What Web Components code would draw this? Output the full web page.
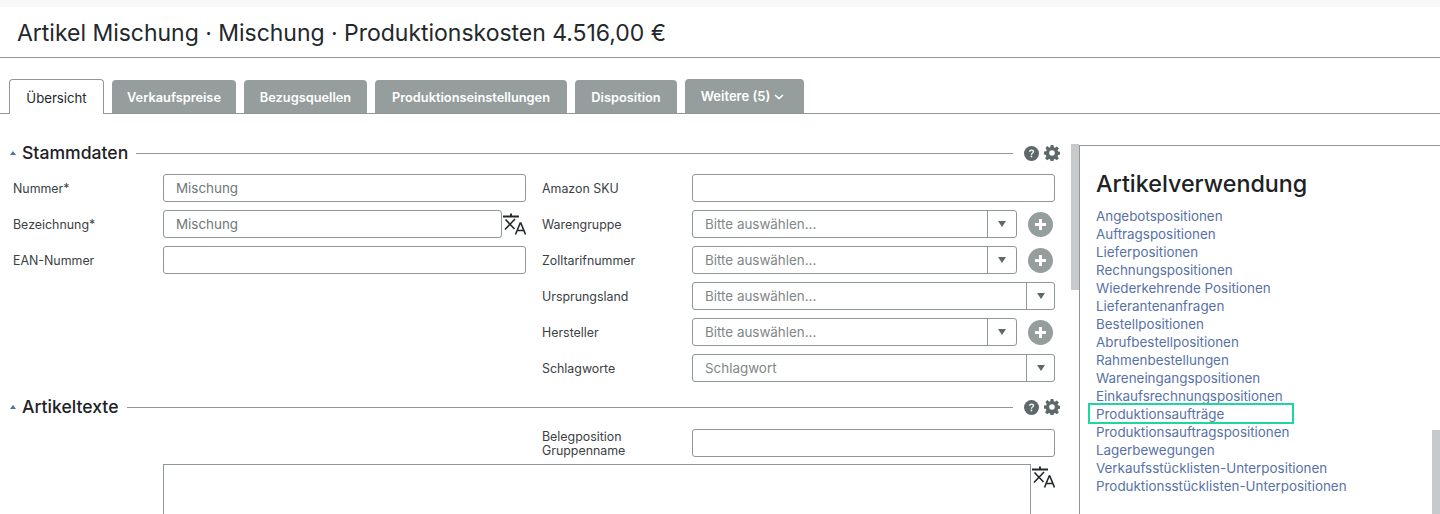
<!DOCTYPE html>
<html lang="de">
<head>
<meta charset="utf-8">
<title>Artikel Mischung</title>
<style>
    html, body { margin: 0; height: 514px; overflow: hidden; background: #fff; }
    body { font-family: Inter, "Noto Sans", sans-serif; color: #23282b; }
</style>
</head>
<body>
<page-title>Artikel Mischung · Mischung · Produktionskosten 4.516,00 €</page-title>
<tab-bar>
    <tab-item active style="width: 95px">Übersicht</tab-item>
    <tab-item style="width: 124px">Verkaufspreise</tab-item>
    <tab-item style="width: 123px">Bezugsquellen</tab-item>
    <tab-item style="width: 192px">Produktionseinstellungen</tab-item>
    <tab-item style="width: 102px">Disposition</tab-item>
    <tab-item more style="width: 119px">Weitere (5)</tab-item>
</tab-bar>
<main-layout>
    <form-section heading="Stammdaten">
        <form-grid>
            <form-field label="Nummer*"><text-box value="Mischung"></text-box></form-field>
            <form-field label="Amazon SKU"><text-box></text-box></form-field>
            <form-field label="Bezeichnung*"><text-box value="Mischung" translate-icon></text-box></form-field>
            <form-field label="Warengruppe"><select-box add></select-box></form-field>
            <form-field label="EAN-Nummer"><text-box></text-box></form-field>
            <form-field label="Zolltarifnummer"><select-box add></select-box></form-field>
            <form-spacer></form-spacer>
            <form-field label="Ursprungsland"><select-box></select-box></form-field>
            <form-spacer></form-spacer>
            <form-field label="Hersteller"><select-box add></select-box></form-field>
            <form-spacer></form-spacer>
            <form-field label="Schlagworte"><select-box placeholder="Schlagwort"></select-box></form-field>
        </form-grid>
    </form-section>
    <form-section heading="Artikeltexte" class="second">
        <form-grid>
            <form-spacer></form-spacer>
            <form-field label="Belegposition Gruppenname"><text-box></text-box></form-field>
        </form-grid>
        <text-area-box></text-area-box>
    </form-section>
    <usage-panel slot="aside" heading="Artikelverwendung">
        <usage-link>Angebotspositionen</usage-link>
        <usage-link>Auftragspositionen</usage-link>
        <usage-link>Lieferpositionen</usage-link>
        <usage-link>Rechnungspositionen</usage-link>
        <usage-link>Wiederkehrende Positionen</usage-link>
        <usage-link>Lieferantenanfragen</usage-link>
        <usage-link>Bestellpositionen</usage-link>
        <usage-link>Abrufbestellpositionen</usage-link>
        <usage-link>Rahmenbestellungen</usage-link>
        <usage-link>Wareneingangspositionen</usage-link>
        <usage-link>Einkaufsrechnungspositionen</usage-link>
        <usage-link marked>Produktionsaufträge</usage-link>
        <usage-link>Produktionsauftragspositionen</usage-link>
        <usage-link>Lagerbewegungen</usage-link>
        <usage-link>Verkaufsstücklisten-Unterpositionen</usage-link>
        <usage-link>Produktionsstücklisten-Unterpositionen</usage-link>
    </usage-panel>
</main-layout>

<script>
const TRANSLATE_SVG = `
    <svg width="23" height="24" viewBox="0 0 23 24" fill="none" stroke="#23282b" stroke-width="1.6">
        <path stroke-width="1.9" d="M0 4.500h16M8 1.500v3"/>
        <path d="M2.500 7.500l9 9.500M12 7l-10 10.500"/>
        <path d="M12.500 22.500l4.700-11.500h.6l4.700 11.500M14.200 18.500h6.600"/>
    </svg>`;

class PageTitle extends HTMLElement {
    connectedCallback() {
        this.attachShadow({ mode: 'open' });
        this.shadowRoot.innerHTML = `
            <style>
                :host {
                    display: block;
                    margin-top: 7px;
                    height: 50px;
                    box-shadow: 0 -7px 0 #f8f8f8;
                    border-bottom: 1px solid #8f9797;
                    padding-left: 17px;
                    font-size: 23px;
                    letter-spacing: -0.02px;
                    line-height: 52px;
                    color: #23282b;
                    white-space: nowrap;
                }
            </style>
            <slot></slot>
        `;
    }
}

class TabBar extends HTMLElement {
    connectedCallback() {
        this.attachShadow({ mode: 'open' });
        this.shadowRoot.innerHTML = `
            <style>
                :host {
                    display: flex;
                    align-items: flex-end;
                    gap: 8px;
                    height: 34px;
                    margin-top: 21px;
                    padding-left: 9px;
                    border-bottom: 1px solid #8f9797;
                }
            </style>
            <slot></slot>
        `;
    }
}

class TabItem extends HTMLElement {
    connectedCallback() {
        this.attachShadow({ mode: 'open' });
        const more = this.hasAttribute('more');
        this.shadowRoot.innerHTML = `
            <style>
                :host {
                    display: flex;
                    align-items: center;
                    justify-content: center;
                    box-sizing: border-box;
                    height: 33px;
                    padding-top: 1px;
                    background: #959d9d;
                    border-radius: 4px 4px 0 0;
                    color: #fff;
                    font-size: 12.800px;
                    font-weight: 600;
                    white-space: nowrap;
                }
                :host([active]) {
                    height: 35px;
                    margin-bottom: -1px;
                    background: #fff;
                    color: #23282b;
                    font-size: 13.200px;
                    font-weight: 400;
                    border: 1px solid #8f9797;
                    border-bottom: 0;
                }
                :host([more]) { height: 34px; padding: 0 4px 0 0; font-size: 13px; }
                svg { margin-left: 4px; margin-top: 2px; }
            </style>
            <slot></slot>
            ${more ? '<svg width="10" height="6" viewBox="0 0 10 6" fill="none" stroke="#fff" stroke-width="1.6"><path d="M1 1l4 3.700L9 1"/></svg>' : ''}
        `;
    }
}

class MainLayout extends HTMLElement {
    connectedCallback() {
        this.attachShadow({ mode: 'open' });
        this.shadowRoot.innerHTML = `
            <style>
                :host {
                    display: grid;
                    grid-template-columns: 1071px 8px 1fr;
                    position: relative;
                    height: 400px;
                    overflow: hidden;
                }
                .left { padding-top: 22px; }
                .track { padding-top: 30px; }
                .thumb { height: 146px; background: #c8c9cb; }
                .thumb.end {
                    position: absolute;
                    right: 0;
                    top: 316px;
                    width: 8px;
                    height: 84px;
                }
            </style>
            <div class="left"><slot></slot></div>
            <div class="track"><div class="thumb"></div></div>
            <slot name="aside"></slot>
            <div class="thumb end"></div>
        `;
    }
}

class FormSection extends HTMLElement {
    connectedCallback() {
        this.attachShadow({ mode: 'open' });
        this.shadowRoot.innerHTML = `
            <style>
                :host { display: block; }
                :host(.second) { margin-top: 8px; }
                header {
                    display: flex;
                    align-items: center;
                    height: 34px;
                    margin: 0 1px 4px 0;
                    padding: 0 10px;
                }
                .caret {
                    width: 0; height: 0;
                    border: 3.500px solid transparent;
                    border-top: 0;
                    border-bottom: 4px solid #566f9f;
                    margin-right: 6px;
                }
                h2 {
                    margin: 0 0 2px;
                    font-size: 17.600px;
                    font-weight: 500;
                    color: #1d2225;
                    white-space: nowrap;
                }
                .line { flex: 1; height: 1px; background: #8f9797; margin: 0 11px 0 8px; }
                .icons { display: flex; gap: 5px; align-items: center; }
                svg { display: block; }
            </style>
            <header>
                <span class="caret"></span>
                <h2>${this.getAttribute('heading')}</h2>
                <span class="line"></span>
                <span class="icons">
                    <svg width="15" height="15" viewBox="0 0 15 15">
                        <circle cx="7.500" cy="7.500" r="7.500" fill="#5f6869"/>
                        <path d="M5 5.800c.1-1.500 1.200-2.300 2.600-2.300 1.500 0 2.600.9 2.600 2.100 0 1.900-2.100 1.700-2.100 3.200H6.700c0-2.100 2-2 2-3.100 0-.5-.5-.9-1.100-.9-.7 0-1.100.4-1.200 1z" fill="#fff"/>
                        <rect x="6.700" y="9.700" width="1.500" height="1.600" fill="#fff"/>
                    </svg>
                    <svg width="16" height="16" viewBox="0 0 16 16">
                        <path fill="#5f6869" fill-rule="evenodd" d="M6.600 0h2.800l.4 2.200 1.200.5 1.900-1.300 2 2-1.300 1.900.5 1.200 2.200.4v2.800l-2.200.4-.5 1.200 1.300 1.900-2 2-1.900-1.300-1.200.5-.4 2.200H6.600l-.4-2.200-1.200-.5-1.900 1.300-2-2 1.300-1.900-.5-1.200L0 9.400V6.600l2.200-.4.5-1.200-1.300-1.900 2-2L5.300 2.700l1-.5zM8 5.200a2.800 2.800 0 1 0 0 5.600 2.800 2.800 0 0 0 0-5.600z"/>
                    </svg>
                </span>
            </header>
            <slot></slot>
        `;
    }
}

class FormGrid extends HTMLElement {
    connectedCallback() {
        this.attachShadow({ mode: 'open' });
        this.shadowRoot.innerHTML = `
            <style>
                :host {
                    display: grid;
                    grid-template-columns: 513px 513px;
                    column-gap: 16px;
                    row-gap: 8px;
                    padding-left: 13px;
                }
            </style>
            <slot></slot>
        `;
    }
}

class FormField extends HTMLElement {
    connectedCallback() {
        this.attachShadow({ mode: 'open' });
        this.shadowRoot.innerHTML = `
            <style>
                :host {
                    display: grid;
                    grid-template-columns: 150px 1fr;
                    align-items: center;
                    height: 28px;
                }
                .label {
                    padding-top: 2px;
                    font-size: 12.400px;
                    line-height: 14px;
                    color: #3a4144;
                    width: 110px;
                }
            </style>
            <div class="label">${this.getAttribute('label')}</div>
            <slot></slot>
        `;
    }
}

class FormSpacer extends HTMLElement {
    connectedCallback() {
        this.attachShadow({ mode: 'open' });
        this.shadowRoot.innerHTML = `<style>:host { display: block; height: 28px; }</style>`;
    }
}

class TextBox extends HTMLElement {
    connectedCallback() {
        this.attachShadow({ mode: 'open' });
        const hasIcon = this.hasAttribute('translate-icon');
        this.shadowRoot.innerHTML = `
            <style>
                :host { display: flex; align-items: center; gap: 1px; height: 28px; }
                .box {
                    flex: 1;
                    box-sizing: border-box;
                    height: 28px;
                    padding: 0 12px;
                    border: 1px solid #8f9797;
                    border-radius: 3px;
                    font-size: 13.400px;
                    line-height: 26px;
                    color: #6f7779;
                }
                svg { display: block; }
            </style>
            <div class="box">${this.getAttribute('value') || ''}</div>
            ${hasIcon ? TRANSLATE_SVG : ''}
        `;
    }
}

class SelectBox extends HTMLElement {
    connectedCallback() {
        this.attachShadow({ mode: 'open' });
        const add = this.hasAttribute('add');
        this.shadowRoot.innerHTML = `
            <style>
                :host { display: flex; align-items: center; height: 28px; }
                .box {
                    flex: 1;
                    display: flex;
                    box-sizing: border-box;
                    height: 28px;
                    border: 1px solid #8f9797;
                    border-radius: 3px;
                }
                .text {
                    flex: 1;
                    padding-left: 12px;
                    font-size: 13.400px;
                    line-height: 26px;
                    color: #7f8688;
                }
                .arrow {
                    display: flex;
                    align-items: center;
                    justify-content: center;
                    width: 28px;
                    border-left: 1px solid #8f9797;
                }
                :host(:not([add])) .arrow { width: 27px; }
                .arrow::before {
                    content: '';
                    border: 4px solid transparent;
                    border-bottom: 0;
                    border-top: 6px solid #5f6869;
                }
                .add {
                    flex: none;
                    width: 25px;
                    height: 25px;
                    margin: 0 2px 0 11px;
                }
                svg { display: block; }
            </style>
            <div class="box">
                <span class="text">${this.getAttribute('placeholder') || 'Bitte auswählen...'}</span>
                <span class="arrow"></span>
            </div>
            ${add ? `<svg class="add" viewBox="0 0 25 25"><circle cx="12.500" cy="12.500" r="12.500" fill="#959d9d"/><path d="M12.500 7v11M7 12.500h11" stroke="#fff" stroke-width="3"/></svg>` : ''}
        `;
    }
}

class TextAreaBox extends HTMLElement {
    connectedCallback() {
        this.attachShadow({ mode: 'open' });
        this.shadowRoot.innerHTML = `
            <style>
                :host {
                    display: flex;
                    gap: 1px;
                    margin: 8px 0 0 163px;
                    width: 892px;
                }
                .area {
                    flex: 1;
                    box-sizing: border-box;
                    height: 120px;
                    border: 1px solid #8f9797;
                }
                svg { display: block; margin-top: 1px; }
            </style>
            <div class="area"></div>
            ${TRANSLATE_SVG}
        `;
    }
}

class UsagePanel extends HTMLElement {
    connectedCallback() {
        this.attachShadow({ mode: 'open' });
        this.shadowRoot.innerHTML = `
            <style>
                :host {
                    display: block;
                    box-sizing: border-box;
                    margin-top: 31px;
                    height: 369px;
                    padding-left: 16px;
                    border-left: 1px solid #8f9797;
                    border-top: 1px solid #8f9797;
                }
                h2 {
                    margin: 24px 0 9px;
                    font-size: 23.300px;
                    line-height: 28px;
                    font-weight: 500;
                    color: #1d2225;
                }
            </style>
            <h2>${this.getAttribute('heading')}</h2>
            <slot></slot>
        `;
    }
}

class UsageLink extends HTMLElement {
    connectedCallback() {
        this.attachShadow({ mode: 'open' });
        this.shadowRoot.innerHTML = `
            <style>
                :host {
                    display: block;
                    position: relative;
                    height: 18px;
                    font-size: 13.400px;
                    line-height: 18px;
                    color: #5872a5;
                    white-space: nowrap;
                }
                :host([marked])::before {
                    content: '';
                    position: absolute;
                    left: -8px;
                    top: -2px;
                    width: 202px;
                    height: 17px;
                    border: 2px solid #1fd6a0;
                }
            </style>
            <slot></slot>
        `;
    }
}

customElements.define('page-title', PageTitle);
customElements.define('tab-bar', TabBar);
customElements.define('tab-item', TabItem);
customElements.define('main-layout', MainLayout);
customElements.define('form-section', FormSection);
customElements.define('form-grid', FormGrid);
customElements.define('form-field', FormField);
customElements.define('form-spacer', FormSpacer);
customElements.define('text-box', TextBox);
customElements.define('select-box', SelectBox);
customElements.define('text-area-box', TextAreaBox);
customElements.define('usage-panel', UsagePanel);
customElements.define('usage-link', UsageLink);
</script>
</body>
</html>
